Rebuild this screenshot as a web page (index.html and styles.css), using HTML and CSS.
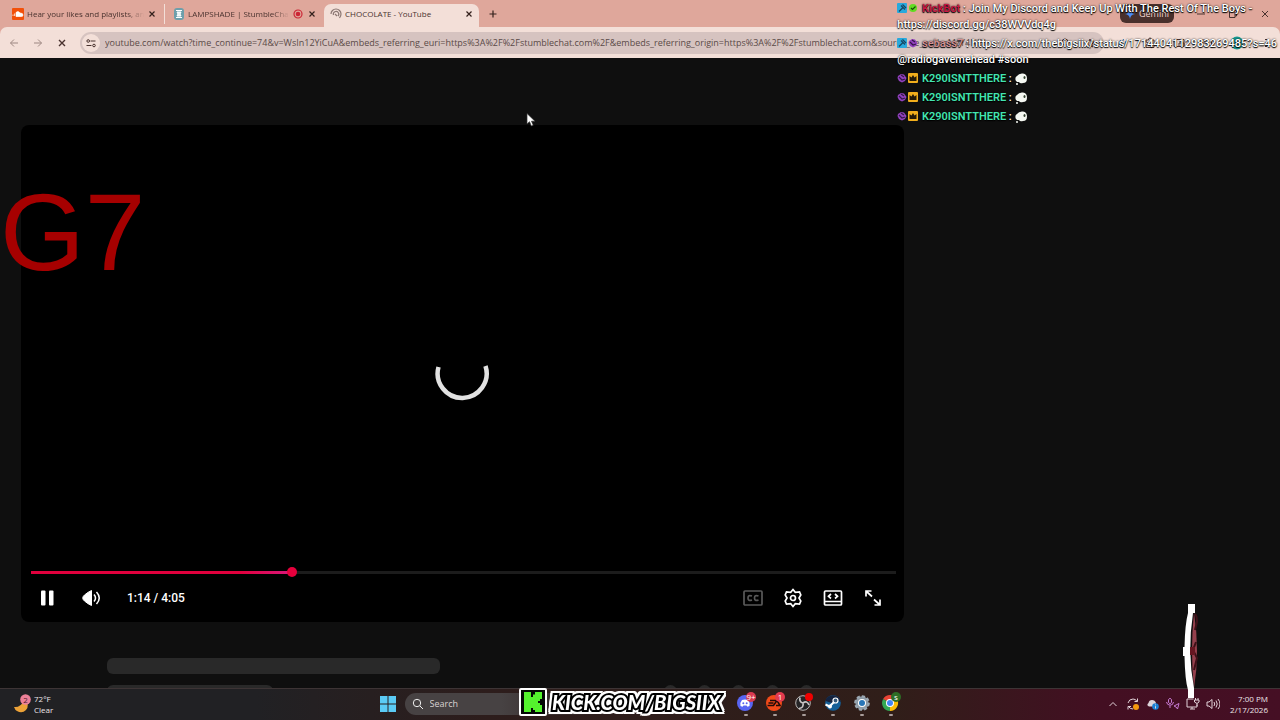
FILE: index.html
```html
<!DOCTYPE html>
<html lang="en">
  <head>
    <meta charset="UTF-8">
    <meta name="viewport" content="width=device-width, initial-scale=1.0">
    <title>CHOCOLATE - YouTube</title>
    <link rel="stylesheet" href="styles.css">
  </head>
  <body>
    <header class="browser">
      <div class="tabs">
        <div class="tab">
          <svg class="favicon" viewBox="0 0 12 12"><rect width="12" height="12" rx="1" fill="#f2500a"/><path d="M1 8V6.500M2.500 8V5.500M4 8.500V4.500Q6 2.500 8 5Q11 5 11 7Q11 8.500 9.500 8.500H4Z" fill="#fff" stroke="#fff" stroke-width=".7"/></svg>
          <span class="tab-title">Hear your likes and playlists, an</span>
          <button class="tab-close" aria-label="Close tab"><svg viewBox="0 0 10 10"><path d="M2.500 2.500l5 5M7.500 2.500l-5 5"/></svg></button>
        </div>
        <div class="tab">
          <svg class="favicon" viewBox="0 0 12 12"><rect x="1" width="10" height="12" rx="3" fill="#6e9fab"/><path d="M3 2.500h6M3 9.500h6M4 4h4L7 6l1 2H4l1-2z" stroke="#fff" fill="#e8f4f4"/></svg>
          <span class="tab-title">LAMPSHADE | StumbleChat</span>
          <svg class="favicon" viewBox="0 0 12 12"><circle cx="6" cy="6" r="4" fill="none" stroke="#cb2636" stroke-width="1.200"/><circle cx="6" cy="6" r="2.300" fill="#cb2636"/></svg>
          <button class="tab-close" aria-label="Close tab"><svg viewBox="0 0 10 10"><path d="M2.500 2.500l5 5M7.500 2.500l-5 5"/></svg></button>
        </div>
        <div class="tab active">
          <svg class="favicon" viewBox="0 0 12 12" fill="none" stroke="#8b7773" stroke-width="1.200"><path d="M1 6A5 5 0 0 1 11 6Q11 8 9.500 10M3.500 7A2.700 2.700 0 1 1 8 8M5 6l2 2"/></svg>
          <span class="tab-title">CHOCOLATE - YouTube</span>
          <button class="tab-close" aria-label="Close tab"><svg viewBox="0 0 10 10"><path d="M2.500 2.500l5 5M7.500 2.500l-5 5"/></svg></button>
        </div>
        <button class="new-tab" aria-label="New tab"><svg viewBox="0 0 10 10"><path d="M5 1.500v7M1.500 5h7" stroke="#33201c" stroke-width="1.200"/></svg></button>
        <div class="window-buttons">
          <button class="gemini"><svg viewBox="0 0 10 10"><path d="M5 0Q5.500 4.500 10 5Q5.500 5.500 5 10Q4.500 5.500 0 5Q4.500 4.500 5 0" fill="#4c8df6"/></svg>Gemini</button>
          <button aria-label="Minimize"><svg viewBox="0 0 10 10"><path d="M1 5h8"/></svg></button>
          <button aria-label="Restore"><svg viewBox="0 0 10 10"><path d="M1.500 3h5.500v5.500H1.500zM3 3V1.500h5.500V7H7"/></svg></button>
          <button aria-label="Close"><svg viewBox="0 0 10 10"><path d="M2 2l6 6M8 2L2 8"/></svg></button>
        </div>
      </div>
      <div class="toolbar">
        <button class="nav dim" aria-label="Back"><svg viewBox="0 0 10 10"><path d="M9 5H1.500M5 1.500L1.500 5L5 8.500"/></svg></button>
        <button class="nav dim" aria-label="Forward"><svg viewBox="0 0 10 10"><path d="M1 5h7.500M5 1.500L8.500 5L5 8.500"/></svg></button>
        <button class="nav stop" aria-label="Stop"><svg viewBox="0 0 10 10"><path d="M2 2l6 6M8 2L2 8"/></svg></button>
        <div class="address">
          <button class="site-info" aria-label="Site information"><svg viewBox="0 0 10 10"><path d="M4.500 3H9.500M.5 7.500H5.500"/><circle cx="2.200" cy="3" r="1.300"/><circle cx="8" cy="7.500" r="1.300"/></svg></button>
          <input class="url" aria-label="Address" value="youtube.com/watch?time_continue=74&amp;v=WsIn12YiCuA&amp;embeds_referring_euri=https%3A%2F%2Fstumblechat.com%2F&amp;embeds_referring_origin=https%3A%2F%2Fstumblechat.com&amp;source_ve_path=MzY4NDI">
          <button class="nav" aria-label="Zoom"><svg viewBox="0 0 10 10"><circle cx="4" cy="4" r="3"/><path d="M6.500 6.500L9 9M3 4h2"/></svg></button>
          <button class="nav" aria-label="Bookmark"><svg viewBox="0 0 10 10"><path d="M5 1l1.200 2.800 3 .2-2.300 2 .8 3L5 7.500 2.300 9l.8-3L.8 4l3-.2z"/></svg></button>
        </div>
        <div class="extensions">
          <svg class="bars" viewBox="0 0 12 12"><path d="M2 10L4.500 3M5 10L7.500 2M8 10L10 4"/></svg>
          <svg viewBox="0 0 12 12"><path d="M2 3h2.500Q4.500 1 6 1T7.500 3H10v7.500H2V8Q4 8 4 6.500T2 5z"/></svg>
          <svg viewBox="0 0 12 12"><path d="M1 2.500h10v7H1zM6 6h5v3.500H6z"/></svg>
          <svg viewBox="0 0 12 12"><path d="M1 3h7M1 6h5M1 9h4M10.500 2v6M8 8.500h2"/></svg>
          <svg class="avatar" viewBox="0 0 14 14"><circle cx="7" cy="7" r="6.500" fill="#189a91" stroke="none"/></svg>
          <svg viewBox="0 0 12 12"><path d="M6 2v1M6 5.500v1M6 9v1" stroke-width="2"/></svg>
        </div>
      </div>
    </header>

    <main class="page">
      <section class="player">
        <div class="stage">
          <svg class="spinner" viewBox="0 0 56 56"><path d="M4.500 20A24.500 24.500 0 1 0 51.500 19" fill="none" stroke="#e2e2e2" stroke-width="4.500"/></svg>
        </div>
        <div class="progress"><div class="played" style="width: 30.2%"></div></div>
        <div class="controls">
          <button aria-label="Pause"><svg viewBox="0 0 20 20" fill="#fff"><rect x="4" y="2.500" width="4.500" height="15" rx="1"/><rect x="12" y="2.500" width="4.500" height="15" rx="1"/></svg></button>
          <button aria-label="Mute"><svg viewBox="0 0 20 20" fill="none" stroke="#fff" stroke-width="1.500"><path d="M10.500 2.500v15Q7 16 3.500 13Q0 10 3.500 7Q7 4 10.500 2.500z" fill="#fff" stroke-width="1"/><path d="M13 6.500Q16 10 13 13.500M15.500 4Q21 10 15.500 16"/></svg></button>
          <span class="time">1:14 / 4:05</span>
          <span class="spacer"></span>
          <button class="off" aria-label="Captions"><svg viewBox="0 0 20 20"><rect x="1" y="3" width="18" height="14" rx="1"/><path d="M9 8Q5 6.500 5 10t4 2M15.500 8q-4-1.500-4 2t4 2"/></svg></button>
          <button aria-label="Settings"><svg viewBox="0 0 20 20"><path d="M10 1.500L12.300 4.300L16.500 4L17.800 7L16 10L17.800 13L16.500 16L12.300 15.700L10 18.500L7.700 15.700L3.500 16L2.200 13L4 10L2.200 7L3.500 4L7.700 4.300z"/><circle cx="10" cy="10" r="2.500"/></svg></button>
          <button aria-label="Embed"><svg viewBox="0 0 20 20"><rect x="1.500" y="3" width="17" height="14" rx="1"/><path d="M2 13.500h16M8 6L5.500 8.300L8 10.500M12 6l2.500 2.300L12 10.500"/></svg></button>
          <button aria-label="Full screen"><svg viewBox="0 0 20 20"><path d="M3 8.500V3h5.500M3.500 3.500L9 8.500M17 11.500V17h-5.500M16.500 16.500L11 11.500"/></svg></button>
        </div>
      </section>
      <section class="skeleton">
        <div class="lines">
          <div class="line"></div>
          <div class="line short"></div>
        </div>
        <div class="dots"><i></i><i></i><i></i><i></i><i></i></div>
      </section>
    </main>

    <footer class="taskbar">
      <div class="weather">
        <svg viewBox="0 0 20 20"><path d="M2 13Q8 14 13 6Q18 11 14 16Q10 20 5 17Q3 16 2 13" fill="#eca238"/><circle cx="13.500" cy="5.500" r="5.300" fill="#ec8098"/><text x="13.500" y="8.500" text-anchor="middle">2</text></svg>
        <p>72°F<br>Clear</p>
      </div>
      <div class="apps">
        <button class="start" aria-label="Start"><svg viewBox="0 0 16 16" fill="#5bcbf5"><path d="M0 0h7.500v7.500H0zM8.500 0H16v7.500H8.500zM0 8.500h7.500V16H0zM8.500 8.500H16V16H8.500z"/></svg></button>
        <label class="search">
          <svg viewBox="0 0 12 12"><circle cx="5" cy="5" r="3.700"/><path d="M8 8l3 3"/></svg>
          <input type="search" placeholder="Search" aria-label="Search">
        </label>
        <button class="app" aria-label="Discord"><svg viewBox="0 0 20 20"><circle cx="9" cy="11" r="8" fill="#5865f2"/><path d="M4.500 14Q4 10 6 8q3-1 6 0 2 2 1.500 6l-2 .7-1-1.200h-3l-1 1.200z" fill="#fff"/><circle cx="7.300" cy="11.200" r="1" fill="#5865f2"/><circle cx="10.700" cy="11.200" r="1" fill="#5865f2"/><circle cx="15" cy="5" r="5" fill="#d83a50"/><text x="15" y="8" text-anchor="middle">9+</text></svg></button>
        <button class="app" aria-label="EA"><svg viewBox="0 0 20 20"><circle cx="9" cy="11" r="8" fill="#f24a19"/><path d="M5 8.500h6M3.500 11h5M2.500 13.500h6L12 8.500l3 5h-4" fill="none" stroke="#210b08" stroke-width="1.500"/><circle cx="15" cy="5" r="5" fill="#e33b4e"/><text x="15" y="8" text-anchor="middle">1</text></svg></button>
        <button class="app" aria-label="OBS Studio"><svg viewBox="0 0 20 20"><circle cx="9" cy="11" r="7.300" fill="#252426" stroke="#b9b5b5"/><path d="M9 11Q5 10 6 5.500M9 11q4-3 6 2M9 11q1 5-4 5.500" fill="none" stroke="#c8c4c4" stroke-width="1.700"/><circle cx="15" cy="5" r="4" fill="#f00000"/></svg></button>
        <button class="app" aria-label="Steam"><svg viewBox="0 0 20 20"><circle cx="10" cy="11" r="7.800" fill="#145f98"/><path d="M2.500 9Q3 4 10 3.200Q17 4 17.800 10Q12 7 9 11z" fill="#14233f"/><path d="M2.500 12.500l4 2L12 9" stroke="#fff" stroke-width="2" fill="none"/><circle cx="12.500" cy="8.500" r="2.500" fill="#34597b" stroke="#fff" stroke-width="1.200"/><circle cx="7" cy="14.500" r="2" fill="#fff"/></svg></button>
        <button class="app" aria-label="Settings"><svg viewBox="0 0 20 20"><circle cx="10" cy="11" r="6.700" fill="#8c9aa6" stroke="#9ca8b2" stroke-width="2.300" stroke-dasharray="3.200 2"/><circle cx="10" cy="11" r="4" fill="#fff"/><circle cx="10" cy="11" r="3" fill="#2876b8"/></svg></button>
        <button class="app" aria-label="Chrome"><svg viewBox="0 0 20 20"><path d="M9 11L2.100 7A8 8 0 0 1 16 7z" fill="#e94335"/><path d="M9 11L16 7A8 8 0 0 1 9 19z" fill="#fbbc05"/><path d="M9 11V19A8 8 0 0 1 2.100 7z" fill="#34a853"/><circle cx="9" cy="11" r="4" fill="#fff"/><circle cx="9" cy="11" r="3" fill="#4285f4"/><circle cx="15" cy="5" r="5" fill="#2e6d25"/><text x="15" y="8" text-anchor="middle">s</text></svg></button>
      </div>
      <div class="tray">
        <svg viewBox="0 0 14 14"><path d="M3.500 9L7 5.500L10.500 9"/></svg>
        <svg viewBox="0 0 14 14"><path d="M2 6Q3 2 7 2q3 0 4 2.500M11.500 1.500v3h-3M7 12Q4 12 2.500 9.500M2 12.500v-3h3"/><circle cx="10" cy="10" r="3" fill="#f5990f" stroke="none"/></svg>
        <svg viewBox="0 0 14 14"><path d="M3 9.500Q0 8 2.500 6Q3 3 6 3t4 3v3.500z" fill="#ddd4da" stroke="none"/><circle cx="9.500" cy="9.500" r="3.300" fill="#1980d5" stroke="none"/><path d="M9.500 7.500v.8M9.500 9.200v2.300"/></svg>
        <svg class="mic" viewBox="0 0 14 14"><path d="M2.500 2.500Q4 0 5.500 2.500v3Q4 8 2.500 5.500zM.5 5Q1 8 4 8.200T7.500 5M4 8.500V11M8 9l5-2.500-1.500 5.500-1.500-2z"/></svg>
        <svg viewBox="0 0 14 14"><path d="M7.500 2H1v8h10V7.500M4 12h5M6 10v2M9.500 1v2M12 1v2M8.500 3h4.500v2L11 6.500 8.500 5zM11 6.500V9"/></svg>
        <svg viewBox="0 0 14 14"><path d="M1 5h2l3-2.500v9L3 9H1zM8 5q1.500 2 0 4M10 3.500q2.500 3.500 0 7M12 2q4 5 0 10"/></svg>
        <p class="clock">7:00 PM<br>2/17/2026</p>
      </div>
    </footer>

    <!-- stream overlays -->
    <div class="chat">
      <p><svg class="badge"><use href="#mod"/></svg><svg class="badge"><use href="#check"/></svg> <b class="bot">KickBot</b> : Join My Discord and Keep Up With The Rest Of The Boys - https://discord.gg/c38WVVdq4g</p>
      <p><svg class="badge"><use href="#mod"/></svg><svg class="badge"><use href="#sub"/></svg> <b class="seb">sebass7</b> : https://x.com/thebigsiix/status/1714404112983269485?s=46 @radiogavemehead #soon</p>
      <p><svg class="badge"><use href="#sub"/></svg><svg class="badge"><use href="#crown"/></svg> <b class="viewer">K290ISNTTHERE</b> : <svg class="emote"><use href="#bubble"/></svg></p>
      <p><svg class="badge"><use href="#sub"/></svg><svg class="badge"><use href="#crown"/></svg> <b class="viewer">K290ISNTTHERE</b> : <svg class="emote"><use href="#bubble"/></svg></p>
      <p><svg class="badge"><use href="#sub"/></svg><svg class="badge"><use href="#crown"/></svg> <b class="viewer">K290ISNTTHERE</b> : <svg class="emote"><use href="#bubble"/></svg></p>
    </div>

    <div class="sign">G7</div>

    <svg class="cursor" viewBox="0 0 10 14"><path d="M1 .5V11l2.500-2.300L5.300 13l1.900-.8L5.500 8.200H9z" fill="#fff" stroke="#333" stroke-width=".7"/></svg>

    <svg class="coin" viewBox="0 0 18 96"><path d="M12 8Q18 48 12 84Q8 48 12 8" fill="#94404d"/><path d="M13 10q2 2 2 8l-2 8M14 38l-3 8 4 8-3 12" fill="none" stroke="#3d1018" stroke-width="2"/><path d="M6 0h7v9h-2Q5 48 12 84v10H6v-8Q3 76 2.500 52H1v-9h1.500Q3 20 6 9z" fill="#fff"/><path d="M8 43h5v8H8z" fill="#651621"/></svg>

    <div class="promo">
      <svg viewBox="0 0 28 28"><rect width="28" height="28" rx="2" fill="#fff"/><rect x="2" y="2" width="24" height="24" fill="#050805"/><path d="M5 4h7v5h2V6.500h2V4h7v7h-2v2h-2v2h2v2h2v7h-7v-2h-2v-2h-2v4H5z" fill="#54f22d"/></svg>
      <span>KICK.COM/BIGSIIX</span>
    </div>

    <svg class="defs" aria-hidden="true">
      <symbol id="mod" viewBox="0 0 10 10"><rect width="10" height="10" rx="1" fill="#29a9dc"/><path d="M2 8.500L6 4.500M4 2.500l4 4M5.500 1.500L9 5" stroke="#17445f" stroke-width="1.200"/></symbol>
      <symbol id="check" viewBox="0 0 10 10"><circle cx="5" cy="5" r="4" fill="#62dc23"/><path d="M3 5l1.500 1.500L7.500 3.500" fill="none" stroke="#174c0c" stroke-width="1.200"/></symbol>
      <symbol id="sub" viewBox="0 0 10 10"><path d="M1 3l3-2 3 .5L9.500 5 8 8 5 9.500 2 8 .5 5z" fill="#9141bd"/><path d="M2 4l3 3 3-1M4 2l3 2" fill="none" stroke="#35154a" stroke-width="1.200"/></symbol>
      <symbol id="crown" viewBox="0 0 10 10"><rect width="10" height="10" rx="1" fill="#f1ae1c"/><path d="M1.500 3l2 1.500L5 2l1.500 2.500 2-1.500v5h-7z" fill="#241a08"/></symbol>
      <symbol id="bubble" viewBox="0 0 12 12"><path d="M2 3q2-3 6-2.500Q12 1 12 5.500T8 10Q5 11 4 9Q0 9 .5 6Q0 4 2 3" fill="#f5f8f2"/><circle cx="2" cy="11" r="1" fill="#f5f8f2"/><ellipse cx="9.500" cy="4.500" rx="1" ry="1.500" fill="#33412f"/></symbol>
    </svg>
  </body>
</html>
```
FILE: styles.css
```css
*{
  box-sizing: border-box;
  margin: 0;
}

body{
  display: flex;
  flex-direction: column;
  height: 100vh;
  overflow: hidden;
  background-color: #0f0f0f;
  font-family: "Open Sans", sans-serif;
  font-size: 8px;
}

button{
  padding: 0;
  border: 0;
  background: none;
  color: inherit;
  font: inherit;
}

svg{
  display: block;
  flex: none;
}

/* browser */
.browser{
  flex: none;
  background-color: #dfa79b;
  color: #49322e;
}

.tabs{
  display: flex;
  align-items: center;
  height: 27px;
  padding-left: 4px;
}

.tab{
  display: flex;
  align-items: center;
  gap: 3px;
  width: 160px;
  height: 20px;
  padding: 0 7px 0 8px;
}

.tab + .tab:not(.active){
  border-left: 1px solid #f3dfd8;
}

.tab.active{
  width: 155px;
  height: 23px;
  align-self: flex-end;
  padding: 0 5px 4px 6px;
  border-radius: 7px 7px 0 0;
  background-color: #f3dfd8;
}

.favicon{
  width: 12px;
  height: 12px;
}

.tab-title{
  flex: 1;
  overflow: hidden;
  white-space: nowrap;
}

.tab:not(.active) .tab-title{
  -webkit-mask-image: linear-gradient(to right, #000 85%, transparent);
}

.tab-close svg{
  width: 10px;
  height: 10px;
  stroke: #33201c;
  stroke-width: 1.2;
}

.new-tab{
  padding: 0 9px;
}

.new-tab svg, .window-buttons svg, .nav svg{
  width: 10px;
  height: 10px;
}

.window-buttons{
  display: flex;
  align-items: center;
  gap: 22px;
  margin-left: auto;
  padding-right: 10px;
}

.window-buttons svg, .toolbar svg{
  fill: none;
  stroke: #49322e;
}

.window-buttons .gemini{
  display: flex;
  align-items: center;
  gap: 4px;
  height: 19px;
  padding: 0 5px;
  border-radius: 6px;
  background-color: #49302c;
  color: #eed6d0;
  font-size: 9px;
}

.window-buttons .gemini svg{
  stroke: none;
}

.toolbar{
  display: flex;
  align-items: center;
  height: 31px;
  padding: 0 8px 0 2px;
  border-radius: 7px 7px 0 0;
  background-color: #f3dfd8;
}

.nav{
  padding: 0 7px;
}

.dim{
  opacity: 0.5;
}

.stop svg{
  stroke-width: 1.4;
}

.address{
  display: flex;
  flex: 1;
  align-items: center;
  height: 22px;
  margin-left: 6px;
  padding: 0 2px;
  border-radius: 11px;
  background-color: #d6c3c0;
}

.site-info{
  padding: 4px;
  border-radius: 9px;
  background-color: #f3dfd8;
}

.site-info svg{
  width: 10px;
  height: 10px;
}

.url{
  flex: 1;
  min-width: 0;
  padding: 0 5px;
  border: 0;
  background: none;
  color: #5a4a47;
  font: 9px "Open Sans", sans-serif;
}

.extensions{
  display: flex;
  justify-content: space-between;
  align-items: center;
  width: 168px;
  padding-left: 12px;
}

.extensions svg{
  width: 12px;
  height: 12px;
}

.extensions .bars{
  stroke: #2f76ac;
}

.extensions .avatar{
  width: 14px;
  height: 14px;
}

/* video page */
.page{
  flex: 1;
  min-height: 0;
  overflow: hidden;
  padding: 67px 21px 0;
}

.player{
  display: flex;
  flex-direction: column;
  position: relative;
  width: 71.3%;
  aspect-ratio: 16 / 9;
  padding: 0 8px 8px 10px;
  border-radius: 8px;
  background-color: #000;
}

.stage{
  display: grid;
  place-items: center;
  position: absolute;
  inset: 0;
  padding-top: 4px;
}

.spinner{
  width: 56px;
  height: 56px;
}

.progress{
  margin-top: auto;
  height: 3px;
  background-color: #1c1c1c;
}

.played{
  position: relative;
  height: 3px;
  background: linear-gradient(to right, #e1003d 80%, #d8187c);
}

.played::after{
  content: "";
  position: absolute;
  right: -5px;
  top: -4px;
  width: 10px;
  height: 10px;
  border-radius: 50%;
  background-color: #e6003c;
}

.controls{
  display: flex;
  align-items: center;
  gap: 20px;
  height: 40px;
  padding: 8px 13px 0 6px;
  color: #fff;
}

.controls button{
  width: 20px;
}

.controls button:nth-child(2){
  margin-left: 4px;
}

.controls svg{
  width: 20px;
  height: 20px;
}

.spacer ~ button svg{
  fill: none;
  stroke: #fff;
  stroke-width: 1.7;
}

.controls .off{
  opacity: 0.35;
}

.time{
  padding-left: 6px;
  font: 500 12px Roboto, sans-serif;
}

.spacer{
  flex: 1;
}

.skeleton{
  display: flex;
  gap: 224px;
  padding: 36px 0 0 86px;
}

.line{
  width: 333px;
  height: 16px;
  margin-bottom: 11px;
  border-radius: 6px;
  background-color: #292929;
}

.short{
  width: 166px;
}

.dots{
  display: flex;
  gap: 21px;
  padding-top: 27px;
}

.dots i{
  width: 13px;
  height: 13px;
  border-radius: 50%;
  background-color: #292929;
}

/* taskbar */
.taskbar{
  display: flex;
  flex: none;
  align-items: center;
  height: 32px;
  padding: 0 12px 2px;
  border-top: 1px solid #3d3435;
  background: linear-gradient(to right, #212124 20%, #2d1d1c 38%, #301e19 70%, #430f22 86%, #450f24);
  color: #ece6e8;
}

.weather{
  display: flex;
  flex: 1;
  align-items: center;
  gap: 2px;
  line-height: 11px;
}

.weather svg, .app svg{
  width: 20px;
  height: 20px;
}

.taskbar text{
  fill: #fff;
  font-size: 8px;
}

.taskbar .weather text{
  fill: #511a28;
}

.apps{
  display: flex;
  align-items: center;
  gap: 9px;
}

.start svg{
  width: 16px;
  height: 16px;
}

.search{
  display: flex;
  align-items: center;
  gap: 6px;
  width: 322px;
  height: 22px;
  padding-left: 7px;
  border-radius: 11px;
  background: linear-gradient(to right, #474243 30%, #2d1d1c 60%);
}

.search svg{
  width: 12px;
  height: 12px;
  fill: none;
  stroke: #eee;
}

.search input{
  width: 80px;
  padding: 0;
  border: 0;
  background: none;
  font: 9px "Open Sans", sans-serif;
}

.search input::placeholder{
  color: #d8d2d2;
}

.app{
  display: grid;
  justify-items: center;
}

.app::after{
  content: "";
  width: 4px;
  height: 2px;
  margin-top: 2px;
  border-radius: 1px;
  background-color: #a99d9a;
}

.tray{
  display: flex;
  flex: 1;
  align-items: center;
  justify-content: flex-end;
  gap: 6px;
}

.tray svg{
  width: 14px;
  height: 14px;
  fill: none;
  stroke: #e2d3d9;
}

.tray .mic{
  stroke: #c67ad2;
}

.clock{
  width: 42px;
  line-height: 11px;
  text-align: right;
}

/* overlays */
.chat{
  position: absolute;
  top: 1px;
  left: 70.1%;
  right: 0;
  color: #fff;
  font: 500 11px/16px Roboto, sans-serif;
  text-shadow: 0 0 2px #000, 0 1px 1px #000;
}

.chat p{
  margin-bottom: 3px;
}

.chat svg{
  display: inline-block;
  vertical-align: -1px;
}

.badge{
  width: 10px;
  height: 10px;
  margin-right: 1px;
}

.chat .emote{
  width: 12px;
  height: 12px;
  vertical-align: -3px;
}

.chat b{
  font-weight: 600;
}

.bot{
  color: #c91745;
}

.seb{
  color: #d09094;
}

.viewer{
  color: #43e5b0;
}

.sign{
  position: absolute;
  top: 170px;
  left: 0;
  color: #a60000;
  font: 109px/125px "Liberation Sans", sans-serif;
}

.cursor{
  position: absolute;
  top: 113px;
  left: 526px;
  width: 10px;
  height: 14px;
}

.coin{
  position: absolute;
  right: 80px;
  bottom: 20px;
  width: 18px;
  height: 96px;
}

.promo{
  display: flex;
  align-items: center;
  gap: 5px;
  position: absolute;
  left: 519px;
  bottom: 4px;
  color: #fff;
  font: italic 900 20px/28px Lato, sans-serif;
  white-space: nowrap;
}

.promo svg{
  width: 28px;
  height: 28px;
}

.promo span{
  -webkit-text-stroke: 4px #000;
  paint-order: stroke fill;
  filter: drop-shadow(2px 0 #fff) drop-shadow(-2px 0 #fff) drop-shadow(0 2px #fff) drop-shadow(0 -2px #fff);
}

.defs{
  position: absolute;
  width: 0;
  height: 0;
}
```
